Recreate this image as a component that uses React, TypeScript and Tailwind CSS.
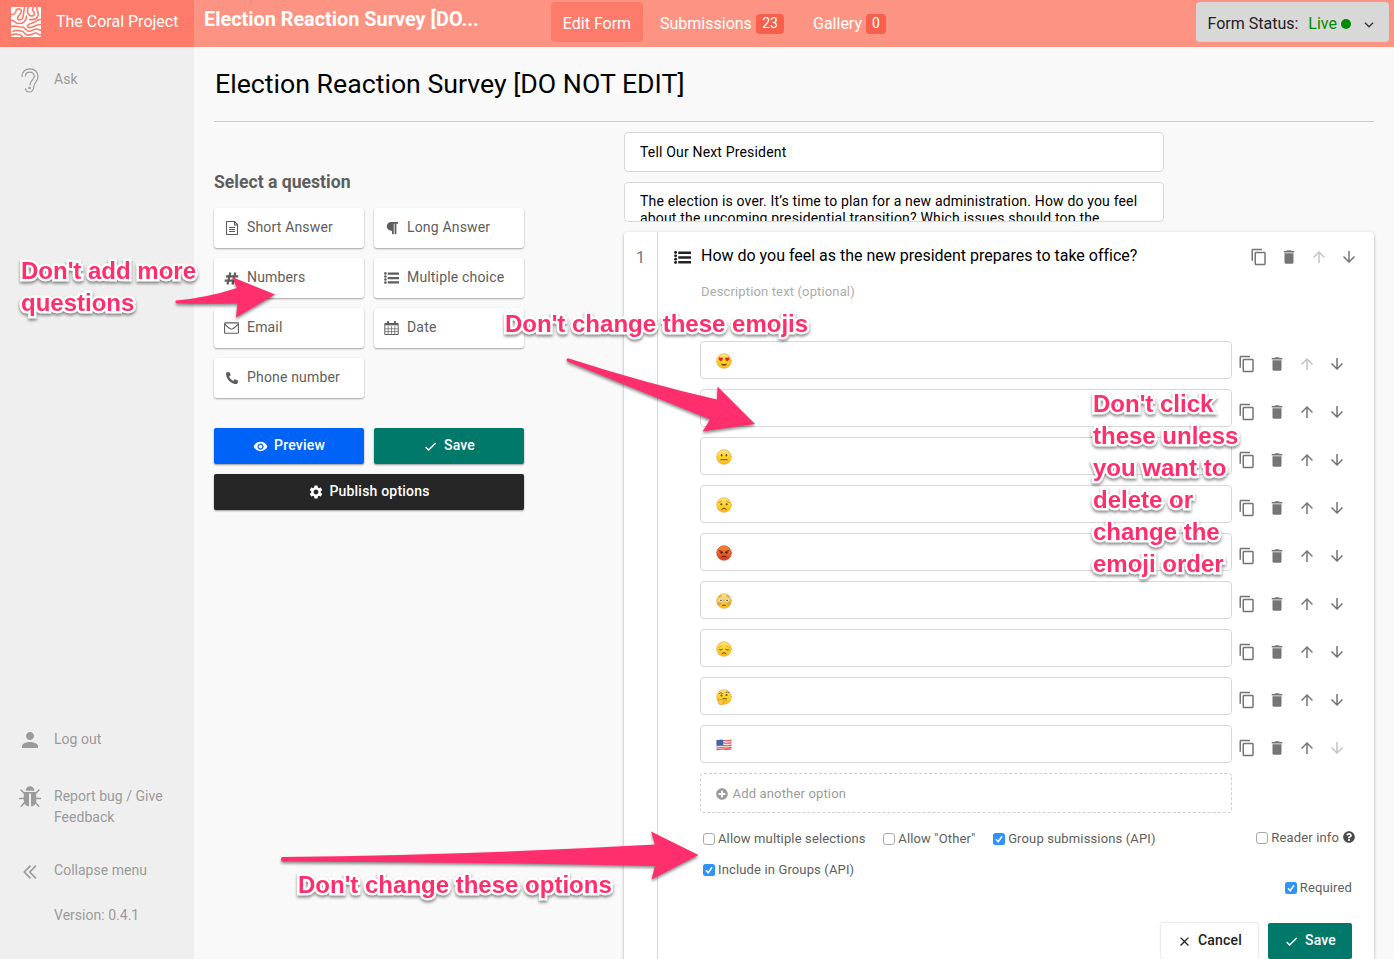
import React from "react";
import { FaParagraph, FaPhoneAlt, FaQuestionCircle, FaPlusCircle } from "react-icons/fa";
import {
  MdContentCopy,
  MdDelete,
  MdArrowUpward,
  MdArrowDownward,
  MdPerson,
  MdSettings,
  MdRemoveRedEye,
  MdCheck,
  MdClose,
} from "react-icons/md";

type IconProps = { className?: string };

const CoralLogo = () => (
  <svg width="30" height="30" viewBox="0 0 30 30">
    <rect width="30" height="30" rx="1" fill="#fff" />
    <g fill="none" stroke="#fb7b6b" strokeWidth="1.600" strokeLinecap="round">
      <path d="M0 7.500C4 8 4.500 6 5 4C5.800 1.200 10.500 1 10.300 4.500C10 7.500 6 9 6.500 11.500C7 14 11.500 13 12 10L13.500 0" />
      <path d="M0 13.500C3 12.500 3.500 16 7 16.500C12 17 15.500 14 15.500 9" />
      <path d="M17.500 0C15.500 3.500 17 9 20.500 9C24 9 24 5.500 22 4C20.500 2.500 22 1 22.500 0" />
      <path d="M26 0C25 3 28 5 27 8.500C26 12.500 22 13 18.500 12.500" />
      <path d="M30 12.500C26 12 24 16 20 16.500C17 17 15 19.500 18 20.500C22 21.500 24 17 30 17.500" />
      <path d="M0 20C3 17.500 7 20.500 10.500 20C13.500 19.500 14 22.500 17 24C20 25.500 23 21.500 26 22C28 22.300 28.500 23.500 30 23" />
      <path d="M2 24.500C5 22 8 24 10.500 24C13 24 13 27 16 28C20 29 22 26 25 26C27 26 27 28.500 30 28" />
      <path d="M0 28.500C3 26 6 27.500 8 27.500C10 27.500 10 29 11.500 30" />
    </g>
  </svg>
);

const EarIcon = () => (
  <svg width="18" height="25" viewBox="0 0 18 25" fill="none" stroke="#9b9b9b" strokeWidth="1.200" strokeLinecap="round">
    <path d="M1 8.500C1 3.500 4.500 .8 9 .8C13.500 .8 17 4 17 8.500C17 13.500 13.200 14.500 12.800 18.500C12.500 22 11 24 8.500 24C6 24 4.600 22.500 4.600 20.500" />
    <path d="M4.500 8C4.500 5.500 6.500 4.200 9 4.200C11.500 4.200 13.300 6 13.300 8.300C13.300 11.500 9 12.500 9 17" />
    <circle cx="8.500" cy="20" r=".7" fill="#9b9b9b" />
  </svg>
);

const BugIcon = () => (
  <svg width="22" height="22" viewBox="0 0 22 22">
    <path d="M6.700 4.700C6.700 2 8.500 .3 11 .3s4.300 1.700 4.300 4.400z" fill="#9b9b9b" />
    <path d="M4.800 6h12.400v8c0 4-2.200 6.300-5.200 6.300V7.500h-2v12.800C7 20.300 4.800 18 4.800 14z" fill="#9b9b9b" />
    <path
      d="M5.500 7.500L2 4M16.500 7.500L20 4M.5 12.500H5M17 12.500h4.500M5.500 16.500L2.300 20.300M16.500 16.500l3.200 3.800"
      stroke="#9b9b9b"
      strokeWidth="1.500"
      strokeLinecap="round"
    />
  </svg>
);

const ChevronsIcon = () => (
  <svg width="14" height="14" viewBox="0 0 14 14" fill="none" stroke="#9b9b9b" strokeWidth="1.700">
    <path d="M7.500 .7L1.300 7l6.200 6.300M13 .7L6.800 7l6.200 6.300" />
  </svg>
);

const FileIcon = () => (
  <svg width="14" height="14" viewBox="0 0 14 14" fill="none" stroke="currentColor">
    <path d="M1.500 .5h8l3 3v10h-11zM9.500.5v3.500h3M4 6.500h6M4 8.500h6M4 10.500h6" strokeWidth="1.100" />
  </svg>
);

const HashIcon = () => (
  <svg width="15" height="13" viewBox="0 0 15 13" fill="none" stroke="currentColor" strokeWidth="2.200">
    <path d="M6.300 .5L3.500 12.500M11.300 .5L8.500 12.500M2 4.300H14.300M.7 8.700H13" />
  </svg>
);

const ListIcon = ({ className = "" }: IconProps) => (
  <svg className={className} viewBox="0 0 16 13" preserveAspectRatio="none" fill="currentColor">
    <circle cx="1.500" cy="1.500" r="1.400" />
    <circle cx="1.500" cy="4.800" r="1.400" />
    <circle cx="1.500" cy="8.200" r="1.400" />
    <circle cx="1.500" cy="11.500" r="1.400" />
    <path d="M4 .5H16v2.500H4zM4 5.300H16v2.500H4zM4 10H16v2.500H4z" />
  </svg>
);

const EnvelopeIcon = () => (
  <svg width="15" height="12" viewBox="0 0 15 12" fill="none" stroke="currentColor" strokeWidth="1.100">
    <rect x=".6" y=".9" width="13.800" height="10.300" rx=".6" />
    <path d="M.8 2.200C3 4.500 6 7.200 7.500 7.200S12 4.500 14.200 2.200" />
  </svg>
);

const CalendarIcon = () => (
  <svg width="15" height="14" viewBox="0 0 15 14" fill="none" stroke="currentColor">
    <path d="M.8 2.500h13.400v11H.8z" />
    <path d="M1 3.500h13" strokeWidth="1.600" />
    <path d="M4.200 5v8.500M7.500 5v8.500M10.800 5v8.500M1 7.800h13M1 10.600h13" strokeWidth=".7" />
    <path d="M4 1.200v2M11 1.200v2" strokeWidth="2.200" strokeLinecap="round" />
  </svg>
);

const iconBox = "flex w-[17px] shrink-0 items-center justify-center";

const questionTypes: { label: string; icon: React.ReactNode }[] = [
  { label: "Short Answer", icon: <FileIcon /> },
  { label: "Long Answer", icon: <FaParagraph size={14} /> },
  { label: "Numbers", icon: <HashIcon /> },
  { label: "Multiple choice", icon: <ListIcon className="h-[12px] w-[15px]" /> },
  { label: "Email", icon: <EnvelopeIcon /> },
  { label: "Date", icon: <CalendarIcon /> },
  { label: "Phone number", icon: <FaPhoneAlt size={12} /> },
];

const Face = ({ angry, children }: { angry?: boolean; children: React.ReactNode }) => (
  <svg width="16" height="16" viewBox="0 0 16 16" fill="none" strokeLinecap="round">
    <defs>
      <linearGradient id="faceYellow" x1="0" y1="0" x2="0" y2="1">
        <stop offset="0" stopColor="#fde58a" />
        <stop offset=".5" stopColor="#fdd429" />
        <stop offset="1" stopColor="#fbb81d" />
      </linearGradient>
      <linearGradient id="faceRed" x1="0" y1="0" x2="0" y2="1">
        <stop offset="0" stopColor="#f58a3c" />
        <stop offset="1" stopColor="#dc3a1c" />
      </linearGradient>
    </defs>
    <circle cx="8" cy="8" r="7.300" fill={angry ? "url(#faceRed)" : "url(#faceYellow)"} stroke={angry ? "#cf4a1e" : "#eda63a"} strokeWidth=".7" />
    {children}
  </svg>
);

const ink = "#6b4410";

const HeartEyes = () => (
  <Face>
    <path d="M4.700 8.300C2.500 7 2 5 3.200 4.400C4 4 4.700 4.700 4.900 5C5.300 4.500 6.500 4.200 6.900 5C7.400 6.300 6 7.500 4.700 8.300z" fill="#e5261f" />
    <path d="M11.300 8.300C13.500 7 14 5 12.800 4.400C12 4 11.300 4.700 11.100 5C10.700 4.500 9.500 4.200 9.100 5C8.600 6.300 10 7.500 11.300 8.300z" fill="#e5261f" />
    <path d="M5 10.500C6.500 11.200 9.500 11.200 11 10.500C10.500 13.500 5.500 13.500 5 10.500z" fill={ink} />
  </Face>
);
const Neutral = () => (
  <Face>
    <ellipse cx="5.600" cy="6.300" rx=".8" ry="1.200" fill={ink} />
    <ellipse cx="10.400" cy="6.300" rx=".8" ry="1.200" fill={ink} />
    <path d="M4.800 10.700h6.400" stroke={ink} strokeWidth=".9" />
  </Face>
);
const Worried = () => (
  <Face>
    <path d="M2.700 5.600Q4.500 5.300 5.700 3.800M13.300 5.600Q11.500 5.300 10.300 3.800" stroke="#a8741c" strokeWidth=".7" />
    <circle cx="5.300" cy="7.300" r="1" fill={ink} />
    <circle cx="10.700" cy="7.300" r="1" fill={ink} />
    <path d="M5.600 12.300Q8 9.700 10.400 12.300" stroke={ink} />
  </Face>
);
const Angry = () => (
  <Face angry>
    <path d="M3.300 5.700Q6 6 7 7.500M12.700 5.700Q10 6 9 7.500" stroke="#4a1608" strokeWidth=".9" />
    <circle cx="5.400" cy="7.800" r="1" fill="#4a1608" />
    <circle cx="10.600" cy="7.800" r="1" fill="#4a1608" />
    <path d="M5.700 11.900Q8 10 10.300 11.900" stroke="#4a1608" />
  </Face>
);
const Flushed = () => (
  <Face>
    <circle cx="3.400" cy="10.500" r="2" fill="#f58a4a" opacity=".7" />
    <circle cx="12.600" cy="10.500" r="2" fill="#f58a4a" opacity=".7" />
    <path d="M3 3.800Q4 2.700 5.500 2.900M13 3.800Q12 2.700 10.500 2.900" stroke="#a8741c" strokeWidth=".7" />
    <circle cx="4.900" cy="7.300" r="2.200" fill="#fff" stroke="#a9a08c" strokeWidth=".5" />
    <circle cx="11.100" cy="7.300" r="2.200" fill="#fff" stroke="#a9a08c" strokeWidth=".5" />
    <circle cx="4.900" cy="7.300" r=".9" fill={ink} />
    <circle cx="11.100" cy="7.300" r=".9" fill={ink} />
    <path d="M6.500 12.300h3" stroke={ink} />
  </Face>
);
const Disappointed = () => (
  <Face>
    <path d="M2.800 6.300Q4.500 5.900 5.600 4.700M13.200 6.300Q11.500 5.900 10.400 4.700" stroke="#b9882c" strokeWidth=".6" />
    <path d="M3.300 8.800Q5 9.600 6.400 8.300M12.700 8.800Q11 9.600 9.600 8.300" stroke={ink} strokeWidth=".9" />
    <path d="M6 12.500Q8 10.500 10 12.500" stroke={ink} />
  </Face>
);
const Thinking = () => (
  <Face>
    <path d="M3.200 4.500Q5 2.800 6.500 4.300M9.800 3.300Q11.500 2.300 13 3.600" stroke={ink} strokeWidth=".8" />
    <circle cx="5.500" cy="6.500" r="1" fill={ink} />
    <circle cx="10.500" cy="6" r="1" fill={ink} />
    <path d="M6.500 10Q8.500 8.900 10.500 9.700" stroke={ink} strokeWidth=".9" />
    <path d="M2.500 10.500C3 9.300 4 9.800 4 11L9.500 10.300C10.800 10.300 10.800 11.600 9.600 11.800L7.500 12.300C8.200 14.500 6.500 16 4.500 15.800C2.700 15.500 2 13 2.500 10.500z" fill="#fdc93a" stroke="#d98a1d" strokeWidth=".6" />
  </Face>
);
const Flag = () => (
  <svg width="16" height="16" viewBox="0 0 16 16">
    <path d="M.5 3.200Q4 2.400 8 3T15.500 2.600V12.200Q12 13.200 8 12.600T.5 13z" fill="#f4e4e4" />
    <path
      d="M.5 3.700Q4 2.900 8 3.500T15.500 3.100M.5 6.200Q4 5.400 8 6T15.500 5.600M.5 8.700Q4 7.900 8 8.500T15.500 8.100M.5 11Q4 10.200 8 10.800T15.500 10.400M.5 12.600Q4 12 8 12.300T15.500 12"
      stroke="#e0525c"
      fill="none"
      strokeWidth="1.100"
    />
    <path d="M.5 3.200Q4 2.500 7.200 2.900V8.500Q4 8 .5 8.800z" fill="#3f68a8" />
  </svg>
);

const options: (React.ReactNode | null)[] = [
  <HeartEyes />,
  null,
  <Neutral />,
  <Worried />,
  <Angry />,
  <Flushed />,
  <Disappointed />,
  <Thinking />,
  <Flag />,
];

const RowActions = ({ first, last }: { first?: boolean; last?: boolean }) => (
  <div className="flex w-[120px] text-[#757575]">
    <span className="flex w-[30px] justify-center">
      <MdContentCopy size={18} />
    </span>
    <span className="flex w-[30px] justify-center">
      <MdDelete size={18} />
    </span>
    <span className={first ? "flex w-[30px] justify-center text-[#c4c4c4]" : "flex w-[30px] justify-center"}>
      <MdArrowUpward size={18} />
    </span>
    <span className={last ? "flex w-[30px] justify-center text-[#c4c4c4]" : "flex w-[30px] justify-center"}>
      <MdArrowDownward size={18} />
    </span>
  </div>
);

const Check = ({ checked, label }: { checked?: boolean; label: string }) => (
  <label className="flex h-[20px] items-center gap-[3px] text-[13px] tracking-[0.14px] whitespace-nowrap text-[#5e5e5e]">
    {checked ? (
      <svg width="12" height="12" viewBox="0 0 12 12">
        <rect width="12" height="12" rx="2.500" fill="#2f93fb" />
        <path d="M3 6.300L5.200 8.700L9 3.300" fill="none" stroke="#fff" strokeWidth="1.500" />
      </svg>
    ) : (
      <span className="h-[12px] w-[12px] rounded-[3px] border border-[#a9a9a9] bg-white" />
    )}
    <span>{label}</span>
  </label>
);

const Note = ({ className, children }: { className: string; children: React.ReactNode }) => (
  <p
    className={
      "absolute font-['Liberation_Sans',Arial,sans-serif] text-[24px] leading-[32px] font-bold whitespace-nowrap text-[#ff2f6d] [-webkit-text-stroke:5px_#fff] [paint-order:stroke_fill] [stroke-linejoin:round] [filter:drop-shadow(0_2px_1.500px_rgba(0,0,0,0.45))] " +
      className
    }
  >
    {children}
  </p>
);

export default function App() {
  return (
    <div className="relative flex h-[959px] w-[1394px] flex-col overflow-hidden bg-[#f9f9f9] font-[Roboto,sans-serif]">
      <header className="flex h-[47px] shrink-0 bg-[#fd9483] text-white">
        <div className="flex w-[194px] items-center bg-[#fc7b6b] pb-[3px] pl-[11px]">
          <CoralLogo />
          <span className="ml-[15px] text-[16px]">The Coral Project</span>
        </div>
        <h2 className="w-[357px] pt-[6px] pl-[10px] text-[19.850px] leading-[28px] font-bold">Election Reaction Survey [DO...</h2>
        <nav className="flex flex-1 pt-[2px] text-[16px]">
          <span className="flex h-[40px] w-[92px] items-center justify-center rounded-[4px] bg-[#fc7b6b] pt-[3px]">Edit Form</span>
          <span className="ml-[17px] flex h-[40px] w-[124px] items-center pt-[3px]">
            Submissions
            <span className="ml-auto flex h-[20px] w-[28px] items-center justify-center rounded-[4px] bg-[#f95f4b] text-[14px]">23</span>
          </span>
          <span className="ml-[29px] flex h-[40px] w-[73px] items-center pt-[3px]">
            Gallery
            <span className="ml-auto flex h-[20px] w-[20px] items-center justify-center rounded-[4px] bg-[#f95f4b] text-[14px]">0</span>
          </span>
          <div className="mr-[5px] ml-auto flex h-[40px] w-[193px] items-center rounded-[4px] bg-[#d8d8d8] pt-[3px] pl-[11.500px] text-[#222]">
            Form Status:
            <span className="ml-[10px] text-[#008a00]">Live</span>
            <span className="ml-[4px] h-[10px] w-[10px] rounded-full bg-[#008a00]" />
            <svg className="mt-[3px] ml-[13px]" width="10" height="6" viewBox="0 0 10 6" fill="none" stroke="#333" strokeWidth="1.300">
              <path d="M1 .7L5 4.800L9 .7" />
            </svg>
          </div>
        </nav>
      </header>

      <div className="flex min-h-0 flex-1">
        <aside className="flex w-[194px] shrink-0 flex-col bg-[#efefef] text-[14px] leading-[21px] tracking-[0.020px] text-[#9b9b9b]">
          <div className="mt-[20px] flex h-[26px] items-center">
            <span className="flex w-[54px] justify-center pl-[6px]">
              <EarIcon />
            </span>
            <span className="pb-[2px]">Ask</span>
          </div>
          <div className="mt-auto flex h-[24px] items-center">
            <span className="flex w-[54px] justify-center pl-[6px]">
              <MdPerson size={24} />
            </span>
            <span className="pb-[2px]">Log out</span>
          </div>
          <div className="mt-[34px] flex h-[42px] items-start">
            <span className="flex w-[54px] justify-center pl-[6px]">
              <BugIcon />
            </span>
            <span className="w-[120px]">Report bug / Give Feedback</span>
          </div>
          <div className="mt-[32px] flex h-[21px] items-center">
            <span className="flex w-[54px] justify-center pt-[3px] pl-[6px]">
              <ChevronsIcon />
            </span>
            Collapse menu
          </div>
          <div className="mt-[24px] mb-[33px] pl-[54px]">Version: 0.4.1</div>
        </aside>

        <main className="flex flex-1 flex-col px-[20px]">
          <h1 className="h-[75px] shrink-0 border-b border-[#cacaca] pt-[20px] pl-px text-[26.700px] leading-[34px] text-black">
            Election Reaction Survey [DO NOT EDIT]
          </h1>
          <div className="flex min-h-0 flex-1">
            <section className="w-[310px] shrink-0 pt-[50px]">
              <h3 className="h-[36px] text-[17.600px] leading-[21px] font-bold text-[#5e5e5e]">Select a question</h3>
              <div className="grid grid-cols-2 gap-[10px] text-[14px] tracking-[0.17px] text-[#5e5e5e]">
                {questionTypes.map((q) => (
                  <div key={q.label} className="flex h-[40px] items-center rounded-[3px] bg-white pl-[9px] shadow-[0_1px_2px_rgba(0,0,0,0.35)]">
                    <span className={iconBox}>{q.icon}</span>
                    <span className="ml-[7px] pb-[2px]">{q.label}</span>
                  </div>
                ))}
              </div>
              <div className="mt-[30px] grid grid-cols-2 gap-[10px] text-[14px] font-medium tracking-[0.2px] text-white">
                <div className="flex h-[36px] items-center justify-center gap-[6px] rounded-[2px] bg-[#0063f7] shadow-[0_1px_2px_rgba(0,0,0,0.4)]">
                  <MdRemoveRedEye size={15} />
                  <span className="pb-[1px]">Preview</span>
                </div>
                <div className="flex h-[36px] items-center justify-center gap-[6px] rounded-[2px] bg-[#00796b] shadow-[0_1px_2px_rgba(0,0,0,0.4)]">
                  <MdCheck size={15} />
                  <span className="pb-[1px]">Save</span>
                </div>
                <div className="col-span-2 flex h-[36px] items-center justify-center gap-[5px] rounded-[2px] bg-[#262626] shadow-[0_1px_2px_rgba(0,0,0,0.4)]">
                  <MdSettings size={16} />
                  <span className="pb-[1px]">Publish options</span>
                </div>
              </div>
            </section>

            <section className="ml-[100px] flex w-[750px] flex-col pt-[10px]">
              <div className="h-[40px] w-[540px] shrink-0 rounded-[4px] border border-[#d8d8d8] bg-white pl-[15px] text-[14px] leading-[38px] tracking-[0.17px] text-black">
                Tell Our Next President
              </div>
              <div className="mt-[10px] h-[40px] w-[540px] shrink-0 overflow-hidden rounded-[4px] border border-[#d8d8d8] bg-white pt-[10px] pl-[15px] text-[14px] leading-[17px] tracking-[0.17px] text-black">
                The election is over. It’s time to plan for a new administration. How do you feel
                <br />
                about the upcoming presidential transition? Which issues should top the
              </div>
              <div className="mt-[10px] flex min-h-0 flex-1 rounded-t-[4px] bg-white shadow-[0_1px_3px_rgba(0,0,0,0.35)]">
                <div className="w-[34px] shrink-0 border-r border-[#d8d8d8] pt-[15px] text-center text-[16px] leading-[21px] text-[#757575]">1</div>
                <div className="flex flex-1 flex-col">
                  <div className="flex h-[40px] shrink-0 items-start pl-[16px]">
                    <ListIcon className="mt-[19px] h-[13px] w-[17px] text-[#222]" />
                    <span className="ml-[10px] pt-[13px] text-[16px] leading-[21px] tracking-[-0.010px] text-black">
                      How do you feel as the new president prepares to take office?
                    </span>
                    <div className="mt-[16px] mr-[10px] ml-auto">
                      <RowActions first />
                    </div>
                  </div>
                  <p className="h-[69px] shrink-0 pt-[11px] pl-[43px] text-[13px] leading-[18px] tracking-[0.14px] text-[#acacac]">Description text (optional)</p>
                  <div className="flex flex-col gap-[10px] pl-[42px]">
                    {options.map((emoji, i) => (
                      <div key={i} className="flex h-[38px] items-center">
                        <div className="flex h-[38px] w-[532px] items-center rounded-[4px] border border-[#d8d8d8] bg-white pt-px pl-[15px]">{emoji}</div>
                        <div className="pt-[8px]">
                          <RowActions first={i === 0} last={i === options.length - 1} />
                        </div>
                      </div>
                    ))}
                    <div className="flex h-[40px] w-[532px] items-center gap-[4.500px] rounded-[4px] border border-dashed border-[#cfcfcf] pt-[2px] pl-[15px] text-[13px] tracking-[0.16px] text-[#9b9b9b]">
                      <FaPlusCircle size={12} />
                      Add another option
                    </div>
                  </div>
                  <div className="mt-[15px] flex justify-between pr-[19px] pl-[45px]">
                    <div className="flex flex-col gap-[11px] pt-px">
                      <div className="flex gap-[17.700px]">
                        <Check label="Allow multiple selections" />
                        <Check label={'Allow "Other"'} />
                        <Check checked label="Group submissions (API)" />
                      </div>
                      <Check checked label="Include in Groups (API)" />
                    </div>
                    <div className="flex flex-col items-end">
                      <div className="flex items-center gap-[4px] text-[#4a4a4a]">
                        <Check label="Reader info" />
                        <FaQuestionCircle className="mb-[2px]" size={12} />
                      </div>
                      <div className="mt-[30px] mr-[3px]">
                        <Check checked label="Required" />
                      </div>
                    </div>
                  </div>
                  <div className="mt-[25px] flex shrink-0 justify-end gap-[10px] pr-[22px] text-[14px] font-medium tracking-[0.2px]">
                    <div className="flex h-[36px] w-[97px] items-center justify-center gap-[6px] rounded-[2px] bg-white text-[#222] shadow-[0_0_2px_rgba(0,0,0,0.3)]">
                      <MdClose size={15} />
                      <span className="pb-[2px]">Cancel</span>
                    </div>
                    <div className="flex h-[36px] w-[84px] items-center justify-center gap-[6px] rounded-[2px] bg-[#00796b] text-white">
                      <MdCheck size={15} />
                      <span className="pb-[2px]">Save</span>
                    </div>
                  </div>
                </div>
              </div>
            </section>
          </div>
        </main>
      </div>

      <Note className="top-[255px] left-[21px]">
        Don't add more
        <br />
        questions
      </Note>
      <Note className="top-[308px] left-[505px]">Don't change these emojis</Note>
      <Note className="top-[388px] left-[1093px]">
        Don't click
        <br />
        these unless
        <br />
        you want to
        <br />
        delete or
        <br />
        change the
        <br />
        emoji order
      </Note>
      <Note className="top-[869px] left-[298px]">Don't change these options</Note>
      <svg
        className="absolute top-0 left-0 [filter:drop-shadow(0_2px_1.500px_rgba(0,0,0,0.45))]"
        width="1394"
        height="959"
        viewBox="0 0 1394 959"
        fill="#ff2f6d"
      >
        <path d="M176 300.500Q206 298 237 288L232 277L275 294.500L236 317.500L237.500 303.500Q205 304 177 303.500Q174.500 302 176 300.500z" />
        <path d="M568 358.200Q645 383 717 399.500L717.500 386.500L755 424L702.500 431.500L710 419.500Q645 393 567.500 361.500Q565.500 359 568 358.200z" />
        <path d="M282 857Q470 855 655 844.500L651 831.500L698.500 855L651.500 879.500L655 866Q470 862 282 861.500Q280 859 282 857z" />
      </svg>
    </div>
  );
}
